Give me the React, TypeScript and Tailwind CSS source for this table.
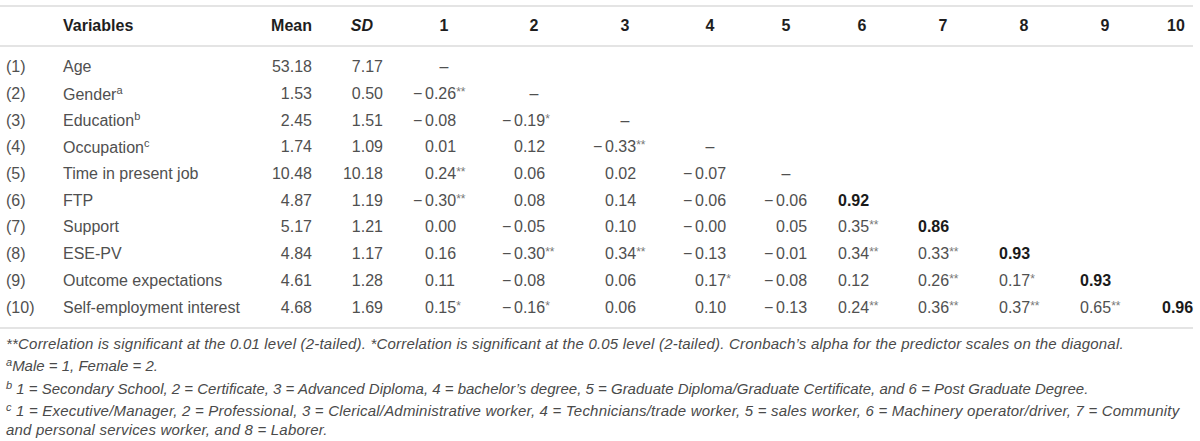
import React from "react";

type Row = {
  id: string;
  name: string;
  sup?: string;
  mean: string;
  sd: string;
  cells: string[];
};

const rows: Row[] = [
  { id: "(1)", name: "Age", mean: "53.18", sd: "7.17", cells: ["–"] },
  { id: "(2)", name: "Gender", sup: "a", mean: "1.53", sd: "0.50", cells: ["−0.26**", "–"] },
  { id: "(3)", name: "Education", sup: "b", mean: "2.45", sd: "1.51", cells: ["−0.08", "−0.19*", "–"] },
  { id: "(4)", name: "Occupation", sup: "c", mean: "1.74", sd: "1.09", cells: ["0.01", "0.12", "−0.33**", "–"] },
  { id: "(5)", name: "Time in present job", mean: "10.48", sd: "10.18", cells: ["0.24**", "0.06", "0.02", "−0.07", "–"] },
  { id: "(6)", name: "FTP", mean: "4.87", sd: "1.19", cells: ["−0.30**", "0.08", "0.14", "−0.06", "−0.06", "B0.92"] },
  { id: "(7)", name: "Support", mean: "5.17", sd: "1.21", cells: ["0.00", "−0.05", "0.10", "−0.00", "0.05", "0.35**", "B0.86"] },
  { id: "(8)", name: "ESE-PV", mean: "4.84", sd: "1.17", cells: ["0.16", "−0.30**", "0.34**", "−0.13", "−0.01", "0.34**", "0.33**", "B0.93"] },
  {
    id: "(9)",
    name: "Outcome expectations",
    mean: "4.61",
    sd: "1.28",
    cells: ["0.11", "−0.08", "0.06", "0.17*", "−0.08", "0.12", "0.26**", "0.17*", "B0.93"],
  },
  {
    id: "(10)",
    name: "Self-employment interest",
    mean: "4.68",
    sd: "1.69",
    cells: ["0.15*", "−0.16*", "0.06", "0.10", "−0.13", "0.24**", "0.36**", "0.37**", "0.65**", "B0.96"],
  },
];

// width of the centred slot for header numbers and diagonal dashes, per column
const slots = ["w-[38px]", "w-[40px]", "w-[40px]", "w-[30px]", "w-[20px]", "w-[48px]", "w-[50px]", "w-[50px]", "w-[50px]", "w-[28px]"];

const grid =
  "grid grid-cols-[63px_200px_49px_71px_42px_89px_91px_90px_81px_62px_80px_81px_81px_82px_31px] items-center";

function Cell({ value, col }: { value?: string; col: number }) {
  if (!value) return <div />;
  if (value === "–") {
    return (
      <div>
        <span className={`inline-block text-center ${slots[col]}`}>–</span>
      </div>
    );
  }
  if (value.startsWith("B")) {
    return <div className="font-bold text-[#1a1a1a]">{value.slice(1)}</div>;
  }
  const neg = value.startsWith("−");
  const body = neg ? value.slice(1) : value;
  const stars = body.match(/\*+$/)?.[0] ?? "";
  const num = body.slice(0, body.length - stars.length);
  return (
    <div className="whitespace-nowrap">
      {neg && <span className="inline-block w-[12px] -ml-[12px]">−</span>}
      {num}
      {stars && <span className="text-[12px] align-[3px] text-[#777]">{stars}</span>}
    </div>
  );
}

export default function App() {
  return (
    <div className="w-[1200px] h-[441px] bg-white pt-[5px] font-['Liberation_Sans',Arial,sans-serif] text-[16px] text-[#505050] overflow-hidden">
      <div className="w-[1193px]">
        <div className="h-[2px] bg-[#e4e4e4]" />
        <div className={`${grid} h-[38px] font-bold text-[#1e1e1e]`}>
          <div />
          <div>Variables</div>
          <div className="text-right">Mean</div>
          <div className="text-right pr-[10px] italic">SD</div>
          <div />
          {slots.map((s, i) => (
            <div key={i}>
              <span className={`inline-block text-center ${s}`}>{i + 1}</span>
            </div>
          ))}
        </div>
        <div className="h-[2px] bg-[#e4e4e4]" />

        <div className="pt-[7px] pb-[6px]">
          {rows.map((r) => (
            <div key={r.id} className={`${grid} h-[26.7px]`}>
              <div className="pl-[6px]">{r.id}</div>
              <div className="whitespace-nowrap">
                {r.name}
                {r.sup && <span className="text-[11px] align-[6px]">{r.sup}</span>}
              </div>
              <div className="text-right">{r.mean}</div>
              <div className="text-right">{r.sd}</div>
              <div />
              {slots.map((_, i) => (
                <Cell key={i} value={r.cells[i]} col={i} />
              ))}
            </div>
          ))}
        </div>
        <div className="h-[2px] bg-[#e4e4e4]" />
      </div>

      <div className="pt-[6px] pl-[6px] italic text-[15px] leading-[18.5px] text-[#4a4a4a]">
        <p className="tracking-[0.2px]">
          **Correlation is significant at the 0.01 level (2-tailed). *Correlation is significant at the 0.05 level
          (2-tailed). Cronbach’s alpha for the predictor scales on the diagonal.
        </p>
        <p>
          <span className="text-[11px] align-[5px]">a</span>Male = 1, Female = 2.
        </p>
        <p>
          <span className="text-[11px] align-[5px]">b</span> 1 = Secondary School, 2 = Certificate, 3 = Advanced
          Diploma, 4 = bachelor’s degree, 5 = Graduate Diploma/Graduate Certificate, and 6 = Post Graduate Degree.
        </p>
        <p className="tracking-[0.2px] whitespace-nowrap">
          <span className="text-[11px] align-[5px]">c</span> 1 = Executive/Manager, 2 = Professional, 3 =
          Clerical/Administrative worker, 4 = Technicians/trade worker, 5 = sales worker, 6 = Machinery
          operator/driver, 7 = Community
          <br />
          and personal services worker, and 8 = Laborer.
        </p>
      </div>
    </div>
  );
}
